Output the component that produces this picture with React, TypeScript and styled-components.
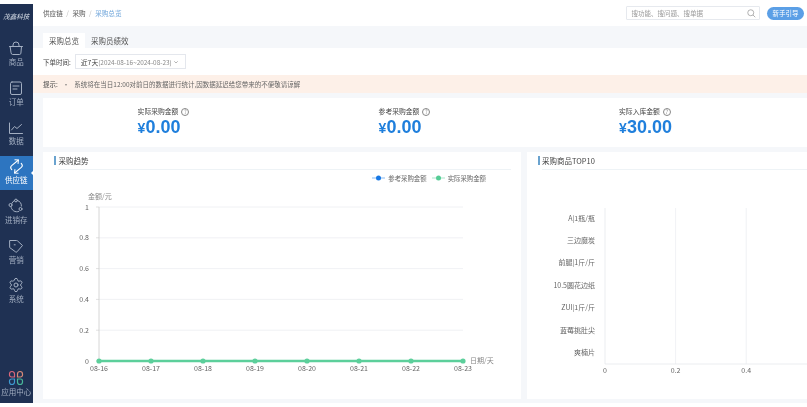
import React from 'react';
import styled, { createGlobalStyle } from 'styled-components';
import { Repeat, Settings } from 'lucide-react';

const Global = createGlobalStyle`
  html, body { margin: 0; padding: 0; background: #fff; }
  body { font-family: "Noto Sans CJK SC", "Noto Sans", sans-serif; font-size: 7.5px; color: #444; }
  * { box-sizing: border-box; }
`;

const Page = styled.div`
  width: 807px; height: 407px; display: flex; overflow: hidden; background: #fff; filter: blur(0.3px);
`;
const Sidebar = styled.nav`
  width: 32.5px; flex: none; margin: 4px 0; background: #1f3153; display: flex; flex-direction: column; align-items: stretch;
`;
const Brand = styled.div`
  height: 24px; margin-bottom: 12px; color: #dfe5ee; font-size: 6.5px; font-style: italic; text-align: center; line-height: 24px; white-space: nowrap;
`;
const NavItem = styled.div<{ $active?: boolean; $compact?: boolean }>`
  position: relative; flex: none;
  height: ${p => (p.$active ? '34px' : p.$compact ? '33px' : '39.5px')};
  margin: ${p => (p.$active ? '-2.5px 0 8px' : '0')};
  padding-bottom: ${p => (p.$active ? '3px' : '0')};
  display: flex; flex-direction: column; align-items: center; justify-content: ${p => (p.$active ? 'center' : 'flex-start')};
  color: ${p => (p.$active ? '#fff' : '#a3afc2')}; background: ${p => (p.$active ? '#2d75c0' : 'transparent')};
  line-height: 10px; white-space: nowrap; gap: 1px;
  svg { display: block; flex: none; }
  ${p => p.$active && `&::after { content: ""; position: absolute; right: -1px; top: 14px; border: 3px solid transparent; border-right-color: #fff; border-left: 0; }`}
`;
const NavSpacer = styled.div` flex: 1; `;
const Main = styled.main`
  flex: 1; min-width: 0; margin-bottom: 4px; display: flex; flex-direction: column; background: #f5f7fa; overflow: hidden;
`;
const TopBar = styled.header`
  height: 26px; flex: none; background: #fff; display: flex; align-items: center; padding: 0 3px 0 10.5px;
`;
const Crumbs = styled.div` display: flex; gap: 3.5px; flex: 1; color: #555; font-size: 6.6px; `;
const Sep = styled.span` color: #bbb; `;
const CrumbNow = styled.span` color: #6fa5da; `;
const Search = styled.div`
  width: 134px; height: 13.5px; border: 1px solid #e6e9ee; display: flex; align-items: center; justify-content: space-between; padding: 0 3px 0 5px; color: #999; margin-right: 7.5px; border-radius: 1px; font-size: 6.5px;
`;
const GuideButton = styled.button`
  width: 37px; height: 13px; border: 0; border-radius: 7px; background: #5b9fe6; color: #fff; font: inherit; font-size: 6.5px; padding: 0;
`;
const TabBar = styled.div`
  height: 22px; flex: none; display: flex; align-items: flex-end; padding-left: 10.5px;
`;
const Tab = styled.div<{ $active?: boolean }>`
  height: 15.5px; line-height: 15px; padding: 0 6px; color: #555; background: ${p => (p.$active ? '#fff' : 'transparent')};
`;
const FilterRow = styled.div`
  height: 27px; flex: none; background: #fff; display: flex; align-items: center; padding-left: 10.5px; color: #444; font-size: 6.5px;
`;
const Select = styled.div`
  width: 111px; height: 15px; margin-left: 4px; border: 1px solid #e4e7ed; display: flex; align-items: center; justify-content: space-between; padding: 0 6px 0 5px; white-space: nowrap; color: #888; font-size: 6.4px;
`;
const SelectStrong = styled.span` color: #444; font-size: 6.8px; `;
const Notice = styled.div`
  height: 18px; flex: none; background: #fdf0e8; display: flex; align-items: center; padding-left: 10.5px; gap: 5px; white-space: nowrap; color: #666; font-size: 6.5px;
`;
const NoticeLead = styled.span` color: #444; `;
const Content = styled.div`
  flex: 1; min-height: 0; padding: 5px 0 0 10.5px; display: flex; flex-direction: column; gap: 5px;
`;
const Stats = styled.section`
  height: 49px; flex: none; background: #fff; display: grid; grid-template-columns: repeat(3, 241px);
`;
const Stat = styled.div`
  display: flex; justify-content: center; padding-top: 8px;
`;
const StatInner = styled.div`
  display: flex; flex-direction: column; align-items: flex-start;
`;
const StatLabel = styled.div`
  font-size: 6.8px; line-height: 11px; color: #444; display: flex; align-items: center; gap: 3px;
`;
const StatValue = styled.div`
  font-family: "Liberation Sans", "Noto Sans CJK SC", sans-serif; font-weight: 700; font-size: 18px; line-height: 20px; color: #1f7fdc;
`;
const Yen = styled.span` font-size: 14px; `;
const Help = styled.span`
  width: 8px; height: 8px; border: 0.6px solid #888; border-radius: 50%; font-size: 5.5px; line-height: 7px; text-align: center; color: #888;
`;
const ChartsRow = styled.div`
  display: flex; gap: 5.5px; width: 1000px; height: 247px; flex: none;
`;
const Card = styled.section<{ $w: number }>`
  width: ${p => p.$w}px; flex: none; background: #fff; padding: 0 10px 0 11px; display: flex; flex-direction: column;
`;
const CardHead = styled.div`
  height: 18px; flex: none; border-bottom: 1px solid #eef3f6; display: flex; align-items: center; margin-left: 4px;
`;
const CardTitle = styled.h3`
  margin: 0 0 0 -4px; font-weight: 400; font-size: 7.5px; line-height: 9px; color: #444; border-left: 2px solid #6aa3cf; padding-left: 2.5px;
`;
const Legend = styled.div`
  height: 16px; display: flex; justify-content: flex-end; align-items: center; gap: 5px; padding-right: 25px; font-size: 6.4px; color: #666;
`;
const LegendItem = styled.span`
  display: flex; align-items: center; gap: 3px;
`;
const ChartSvg = styled.svg`
  display: block; flex: none; margin-left: -11px;
`;
const TiltedRepeat = styled(Repeat)`
  transform: rotate(-40deg);
`;

const stroke = { fill: 'none', stroke: 'currentColor', strokeWidth: 1, strokeLinecap: 'round' as const, strokeLinejoin: 'round' as const };
const Ico = ({ children }: { children: React.ReactNode }) => (
  <svg width="16" height="16" viewBox="0 0 16 16" {...stroke}>{children}</svg>
);

const icons = {
  goods: <Ico><path d="M2.500 6.500h11l-.6 6.700a1.500 1.500 0 0 1-1.500 1.300H4.600a1.500 1.500 0 0 1-1.500-1.300z" /><path d="M5 6.500V5a3 3 0 0 1 6 0v1.500" /><path d="M1.500 6.500h13" /></Ico>,
  order: <Ico><rect x="2.500" y="2" width="11" height="12.500" rx="1.500" /><path d="M5 6h6M5 9h4" /></Ico>,
  data: <Ico><path d="M1.500 4v10.500h13" /><path d="M3.500 11l3-3.500 2.500 2 4.500-4" /></Ico>,
  chain: <TiltedRepeat size={15} strokeWidth={1.7} />,
  stock: <Ico><path d="M6.600 2.500a5.200 5.200 0 0 0-2.800 2.900M9.400 2.500a5.500 5.500 0 0 1 4 5.600M3 8.400a5.500 5.500 0 0 0 7.800 5" /><circle cx="8" cy="2.500" r="1.400" /><circle cx="2.500" cy="7" r="1.500" /><circle cx="12.500" cy="11" r="1.500" /></Ico>,
  market: <Ico><path d="M2 2.500h6.500a1.500 1.500 0 0 1 1 .4l5 4.600-5.500 6.300a1 1 0 0 1-1.400.1L2 9.800z" /><path d="M6.200 6.800h1" /></Ico>,
  system: <Settings size={16} strokeWidth={1.5} />,
  apps: (
    <svg width="16" height="16" viewBox="0 0 16 16" fill="none" strokeWidth="1.200">
      <path d="M1.500 4a2.500 2.500 0 0 1 5 0v3h-3a2 2 0 0 1-2-2z" stroke="#d9677b" />
      <path d="M9.500 4a2.500 2.500 0 0 1 5 0v1a2 2 0 0 1-2 2h-3z" stroke="#d98a78" />
      <path d="M1.500 11a2 2 0 0 1 2-2h3v3a2.500 2.500 0 0 1-5 0z" stroke="#3f9ad0" />
      <path d="M9.500 9h3a2 2 0 0 1 2 2v1a2.500 2.500 0 0 1-5 0z" stroke="#49b89a" />
    </svg>
  ),
};

const navItems = [
  { key: 'goods', label: '商品' },
  { key: 'order', label: '订单' },
  { key: 'data', label: '数据' },
  { key: 'chain', label: '供应链', active: true },
  { key: 'stock', label: '进销存' },
  { key: 'market', label: '营销' },
  { key: 'system', label: '系统' },
] as const;

const stats = [
  { label: '实际采购金额', value: '0.00' },
  { label: '参考采购金额', value: '0.00' },
  { label: '实际入库金额', value: '30.00' },
];

const axisText = { fontSize: 7, fill: '#666' };

function TrendChart() {
  const dates = ['08-16', '08-17', '08-18', '08-19', '08-20', '08-21', '08-22', '08-23'];
  const ticks = [1, 0.8, 0.6, 0.4, 0.2, 0];
  const x0 = 56, step = 52, top = 21, h = 154;
  return (
    <ChartSvg width="478" height="213" viewBox="0 0 478 213">
      <text x="45" y="13" fontSize={7} fill="#888">金额/元</text>
      {ticks.map((t, i) => {
        const y = top + (h / 5) * i;
        return (
          <g key={t}>
            {t !== 0 && <line x1={x0} x2={420} y1={y} y2={y} stroke="#eceef1" strokeWidth="0.8" />}
            <line x1={x0 - 3} x2={x0} y1={y} y2={y} stroke="#ccc" strokeWidth="0.6" />
            <text x={x0 - 10} y={y + 2.500} textAnchor="end" {...axisText}>{t}</text>
          </g>
        );
      })}
      <line x1={x0} x2={x0} y1={top} y2={top + h} stroke="#ccc" strokeWidth="0.8" />
      <text x="427" y={top + h + 2} fontSize={7} fill="#888">日期/天</text>
      <line x1={x0} x2={x0 + step * 7} y1={top + h} y2={top + h} stroke="#5ccf9b" strokeWidth="2.600" />
      {dates.map((d, i) => (
        <g key={d}>
          <circle cx={x0 + step * i} cy={top + h} r="2.600" fill="#5ccf9b" />
          <text x={x0 + step * i} y={top + h + 10} textAnchor="middle" {...axisText}>{d}</text>
        </g>
      ))}
    </ChartSvg>
  );
}

function TopChart() {
  const names = ['A|1瓶/瓶', '三边魔炭', '前腿|1斤/斤', '10.5圆花边纸', 'ZUI|1斤/斤', '蓝莓挑肚尖', '爽楠片'];
  const ticks = [0, 0.2, 0.4];
  const x0 = 78, step = 70.600, top = 38, h = 156;
  return (
    <ChartSvg width="470" height="229" viewBox="0 0 470 229">
      {ticks.map((t, i) => (
        <g key={t}>
          <line x1={x0 + step * i} x2={x0 + step * i} y1={top} y2={top + h} stroke={i === 0 ? '#e6e8ec' : '#eceef1'} strokeWidth="0.8" />
          <text x={x0 + step * i} y={top + h + 9} textAnchor="middle" {...axisText}>{t}</text>
        </g>
      ))}
      <line x1={x0} x2={470} y1={top + h} y2={top + h} stroke="#e6e8ec" strokeWidth="0.8" />
      {names.map((n, i) => (
        <text key={n} x={x0 - 10} y={top + 12.500 + 22.400 * i} textAnchor="end" {...axisText}>{n}</text>
      ))}
    </ChartSvg>
  );
}

const LegendMark = ({ color }: { color: string }) => (
  <svg width="13" height="6" viewBox="0 0 13 6">
    <line x1="0" x2="13" y1="3" y2="3" stroke={color} strokeOpacity=".5" strokeWidth="1" />
    <circle cx="6.500" cy="3" r="2.500" fill={color} />
  </svg>
);

export default function App() {
  return (
    <Page>
      <Global />
      <Sidebar>
        <Brand>茂鑫科技</Brand>
        {navItems.map(n => (
          <NavItem key={n.key} $active={'active' in n}>
            {icons[n.key]}
            <span>{n.label}</span>
          </NavItem>
        ))}
        <NavSpacer />
        <NavItem $compact>
          {icons.apps}
          <span>应用中心</span>
        </NavItem>
      </Sidebar>
      <Main>
        <TopBar>
          <Crumbs>
            <span>供应链</span><Sep>/</Sep><span>采购</span><Sep>/</Sep><CrumbNow>采购总览</CrumbNow>
          </Crumbs>
          <Search>
            <span>搜功能、搜问题、搜单据</span>
            <svg width="9" height="9" viewBox="0 0 24 24" fill="none" stroke="#999" strokeWidth="2"><circle cx="10" cy="10" r="8" /><path d="M16 16l6 6" /></svg>
          </Search>
          <GuideButton>新手引导</GuideButton>
        </TopBar>
        <TabBar>
          <Tab $active>采购总览</Tab>
          <Tab>采购员绩效</Tab>
        </TabBar>
        <FilterRow>
          <span>下单时间:</span>
          <Select>
            <span><SelectStrong>近7天</SelectStrong>(2024-08-16~2024-08-23)</span>
            <svg width="6" height="6" viewBox="0 0 24 24" fill="none" stroke="#888" strokeWidth="2.500"><path d="M5 9l7 7 7-7" /></svg>
          </Select>
        </FilterRow>
        <Notice>
          <NoticeLead>提示:</NoticeLead><span>•</span><span>系统将在当日12:00对前日的数据进行统计,因数据延迟给您带来的不便敬请谅解</span>
        </Notice>
        <Content>
          <Stats>
            {stats.map(s => (
              <Stat key={s.label}>
                <StatInner>
                  <StatLabel>{s.label}<Help>?</Help></StatLabel>
                  <StatValue><Yen>¥</Yen>{s.value}</StatValue>
                </StatInner>
              </Stat>
            ))}
          </Stats>
          <ChartsRow>
            <Card $w={478}>
              <CardHead><CardTitle>采购趋势</CardTitle></CardHead>
              <Legend>
                <LegendItem><LegendMark color="#1677e5" />参考采购金额</LegendItem>
                <LegendItem><LegendMark color="#55cc95" />实际采购金额</LegendItem>
              </Legend>
              <TrendChart />
            </Card>
            <Card $w={478}>
              <CardHead><CardTitle>采购商品TOP10</CardTitle></CardHead>
              <TopChart />
            </Card>
          </ChartsRow>
        </Content>
      </Main>
    </Page>
  );
}
